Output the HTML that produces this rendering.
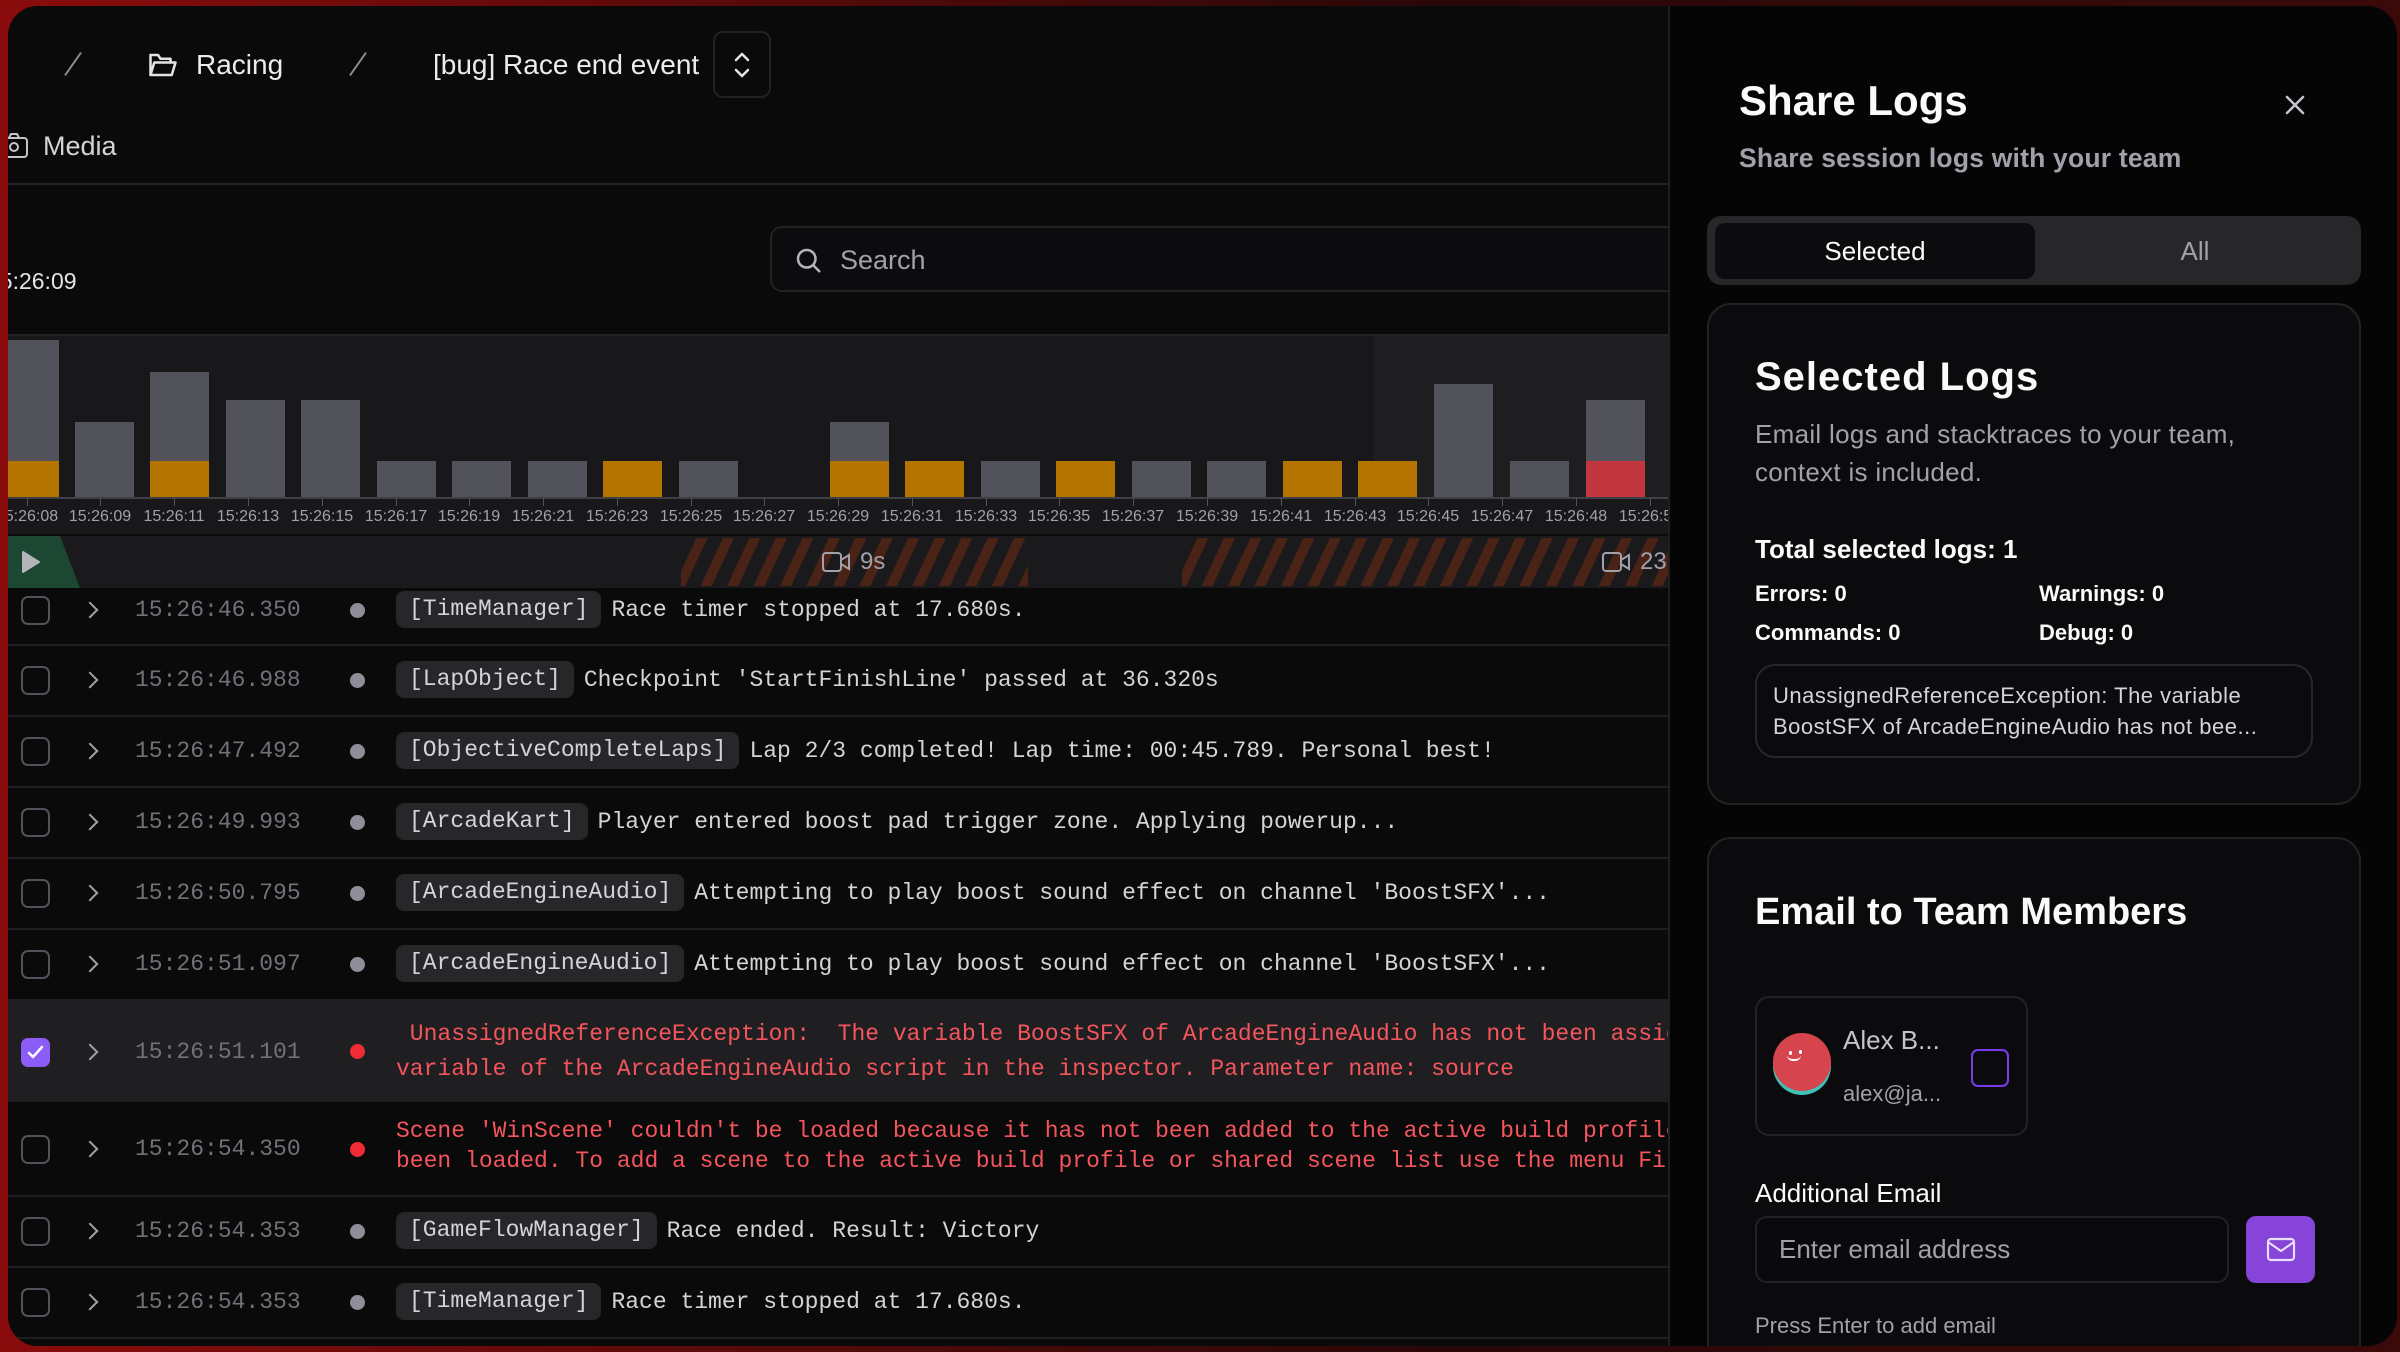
<!DOCTYPE html>
<html><head><meta charset="utf-8"><style>
*{box-sizing:border-box;margin:0;padding:0}
html,body{width:2400px;height:1352px;overflow:hidden}
body{background:linear-gradient(90deg,#8a0c0c 0%,#5a0a0a 30%,#2a0808 60%,#3a0a0a 100%);font-family:"Liberation Sans",sans-serif;position:relative}
#app{position:absolute;left:8px;top:6px;right:3px;bottom:6px;border-radius:30px;background:#0a0a0b;overflow:hidden}
.abs{position:absolute}
#left{position:absolute;left:-8px;top:-6px;width:1668px;height:1352px;overflow:hidden;background:#0a0a0b}
.mono{font-family:"Liberation Mono",monospace}
.tick{position:absolute;top:498px;width:1px;height:8px;background:#52525b}
.tl{position:absolute;top:508px;width:80px;margin-left:-40px;text-align:center;font-size:16px;color:#a1a1aa}
.bar{position:absolute;width:59px;bottom:0}
.row{position:absolute;left:0;width:1668px;border-bottom:2px solid #1f1f22}
.cb{position:absolute;left:21px;width:29px;height:29px;border:2px solid #52525b;border-radius:7px}
.chev{position:absolute;left:84px;width:12px;height:12px;border-right:2px solid #a1a1aa;border-top:2px solid #a1a1aa;transform:rotate(45deg)}
.ts{position:absolute;left:135px;font-size:23px;color:#71717a;line-height:30px}
.dot{position:absolute;left:350px;width:15px;height:15px;border-radius:50%;background:#8e8e98}
.msg{position:absolute;left:396px;white-space:nowrap;font-size:23px;color:#d4d4d8;display:flex;align-items:center}
.tag{background:#27272a;border-radius:8px;padding:0 13px;height:37px;line-height:37px;margin-right:10px;color:#d4d4d8}
.err{position:absolute;left:396px;white-space:pre;font-size:23px;color:#f4555d;line-height:35px}
#drawer{position:absolute;left:1660px;top:-6px;width:732px;height:1352px;background:#050506;border-left:2px solid #1f1f22}
#dc{position:absolute;left:-9px;top:0;width:740px;height:1352px}
.card{position:absolute;left:46px;width:654px;border:2px solid #222225;border-radius:24px;background:#0b0b0d}
</style></head><body>
<div id="app">
<div id="left">
  <div class="abs" style="left:72px;top:50px;width:2px;height:28px;background:#8a8a92;transform:rotate(35deg)"></div>
  <svg class="abs" style="left:148px;top:51px" width="30" height="28" viewBox="0 0 24 22" fill="none" stroke="#e4e4e7" stroke-width="2" stroke-linejoin="round"><path d="M2 19V3h6l2 3h8v3"/><path d="M2 19l3-10h17l-3 10z"/></svg>
  <div class="abs" style="left:196px;top:49px;font-size:28px;color:#ececef">Racing</div>
  <div class="abs" style="left:357px;top:50px;width:2px;height:28px;background:#8a8a92;transform:rotate(35deg)"></div>
  <div class="abs" style="left:433px;top:49px;font-size:28px;color:#ececef">[bug] Race end event</div>
  <div class="abs" style="left:713px;top:31px;width:58px;height:67px;border:2px solid #222225;border-radius:10px"></div>
  <svg class="abs" style="left:730px;top:50px" width="24" height="30" viewBox="0 0 24 30" fill="none" stroke="#e4e4e7" stroke-width="2.5" stroke-linecap="round" stroke-linejoin="round"><path d="M6 10l6-6 6 6"/><path d="M6 20l6 6 6-6"/></svg>
  <svg class="abs" style="left:0px;top:133px" width="28" height="26" viewBox="0 0 28 26" fill="none" stroke="#c4c4ca" stroke-width="2"><rect x="1" y="5" width="26" height="19" rx="3"/><path d="M9 5l2-4h6l2 4"/><circle cx="14" cy="14" r="4"/></svg>
  <div class="abs" style="left:43px;top:131px;font-size:27px;color:#d4d4d8">Media</div>
  <div class="abs" style="left:0;top:183px;width:1668px;height:2px;background:#232326"></div>
  <div class="abs" style="left:-13px;top:268px;font-size:23px;color:#e4e4e7">15:26:09</div>
  <div class="abs" style="left:770px;top:226px;width:960px;height:66px;border:2px solid #222225;border-radius:12px;background:#0c0c0e"></div>
  <svg class="abs" style="left:793px;top:245px" width="30" height="30" viewBox="0 0 24 24" fill="none" stroke="#b4b4bb" stroke-width="2" stroke-linecap="round"><circle cx="11" cy="11" r="7"/><path d="M16.5 16.5L21 21"/></svg>
  <div class="abs" style="left:840px;top:245px;font-size:27px;color:#a1a1aa">Search</div>
  <div class="abs" style="left:0;top:334px;width:1668px;height:200px;background:#18181b;border-top:2px solid #222225"></div>
  <div class="abs" style="left:1374px;top:336px;width:294px;height:162px;background:#1e1e21"></div>
  <div class="abs" style="left:0;top:336px;width:1668px;height:162px">
    <div class="bar" style="left:0px;height:158px;background:linear-gradient(#52525b 0 121px,#b57300 121px)"></div>
    <div class="bar" style="left:75px;height:76px;background:#52525b"></div>
    <div class="bar" style="left:150px;height:126px;background:linear-gradient(#52525b 0 89px,#b57300 89px)"></div>
    <div class="bar" style="left:226px;height:98px;background:#52525b"></div>
    <div class="bar" style="left:301px;height:98px;background:#52525b"></div>
    <div class="bar" style="left:377px;height:37px;background:#52525b"></div>
    <div class="bar" style="left:452px;height:37px;background:#52525b"></div>
    <div class="bar" style="left:528px;height:37px;background:#52525b"></div>
    <div class="bar" style="left:603px;height:37px;background:#b57300"></div>
    <div class="bar" style="left:679px;height:37px;background:#52525b"></div>
    <div class="bar" style="left:830px;height:76px;background:linear-gradient(#52525b 0 39px,#b57300 39px)"></div>
    <div class="bar" style="left:905px;height:37px;background:#b57300"></div>
    <div class="bar" style="left:981px;height:37px;background:#52525b"></div>
    <div class="bar" style="left:1056px;height:37px;background:#b57300"></div>
    <div class="bar" style="left:1132px;height:37px;background:#52525b"></div>
    <div class="bar" style="left:1207px;height:37px;background:#52525b"></div>
    <div class="bar" style="left:1283px;height:37px;background:#b57300"></div>
    <div class="bar" style="left:1358px;height:37px;background:#b57300"></div>
    <div class="bar" style="left:1434px;height:114px;background:#52525b"></div>
    <div class="bar" style="left:1510px;height:37px;background:#52525b"></div>
    <div class="bar" style="left:1586px;height:98px;background:linear-gradient(#52525b 0 61px,#c1363f 61px)"></div>
  </div>
  <div class="abs" style="left:0;top:497px;width:1668px;height:2px;background:#3f3f46"></div>
  <div class="tick" style="left:27px"></div><div class="tl" style="left:27px">15:26:08</div>
  <div class="tick" style="left:100px"></div><div class="tl" style="left:100px">15:26:09</div>
  <div class="tick" style="left:174px"></div><div class="tl" style="left:174px">15:26:11</div>
  <div class="tick" style="left:248px"></div><div class="tl" style="left:248px">15:26:13</div>
  <div class="tick" style="left:322px"></div><div class="tl" style="left:322px">15:26:15</div>
  <div class="tick" style="left:396px"></div><div class="tl" style="left:396px">15:26:17</div>
  <div class="tick" style="left:469px"></div><div class="tl" style="left:469px">15:26:19</div>
  <div class="tick" style="left:543px"></div><div class="tl" style="left:543px">15:26:21</div>
  <div class="tick" style="left:617px"></div><div class="tl" style="left:617px">15:26:23</div>
  <div class="tick" style="left:691px"></div><div class="tl" style="left:691px">15:26:25</div>
  <div class="tick" style="left:764px"></div><div class="tl" style="left:764px">15:26:27</div>
  <div class="tick" style="left:838px"></div><div class="tl" style="left:838px">15:26:29</div>
  <div class="tick" style="left:912px"></div><div class="tl" style="left:912px">15:26:31</div>
  <div class="tick" style="left:986px"></div><div class="tl" style="left:986px">15:26:33</div>
  <div class="tick" style="left:1059px"></div><div class="tl" style="left:1059px">15:26:35</div>
  <div class="tick" style="left:1133px"></div><div class="tl" style="left:1133px">15:26:37</div>
  <div class="tick" style="left:1207px"></div><div class="tl" style="left:1207px">15:26:39</div>
  <div class="tick" style="left:1281px"></div><div class="tl" style="left:1281px">15:26:41</div>
  <div class="tick" style="left:1355px"></div><div class="tl" style="left:1355px">15:26:43</div>
  <div class="tick" style="left:1428px"></div><div class="tl" style="left:1428px">15:26:45</div>
  <div class="tick" style="left:1502px"></div><div class="tl" style="left:1502px">15:26:47</div>
  <div class="tick" style="left:1576px"></div><div class="tl" style="left:1576px">15:26:48</div>
  <div class="tick" style="left:1650px"></div><div class="tl" style="left:1650px">15:26:50</div>
  <div class="abs" style="left:0;top:536px;width:1668px;height:52px;background:#1a1a1d"></div>
  <div class="abs" style="left:0;top:536px;width:80px;height:52px;background:#1b4733;clip-path:polygon(0 0,60px 0,80px 100%,0 100%)"></div>
  <svg class="abs" style="left:20px;top:549px" width="22" height="26" viewBox="0 0 22 26"><path d="M3 3l16 10-16 10z" fill="#b4b4bb" stroke="#b4b4bb" stroke-width="2" stroke-linejoin="round"/></svg>
  <div class="abs" style="left:681px;top:538px;width:347px;height:48px;background:repeating-linear-gradient(115deg,#1a1a1d 0 14px,#4a2316 14px 24px)"></div>
  <div class="abs" style="left:1182px;top:538px;width:486px;height:48px;background:repeating-linear-gradient(115deg,#1a1a1d 0 14px,#4a2316 14px 24px)"></div>
  <svg class="abs" style="left:822px;top:551px" width="30" height="22" viewBox="0 0 30 22" fill="none" stroke="#a1a1aa" stroke-width="2"><rect x="1" y="2" width="18" height="18" rx="3"/><path d="M19 9l8-5v14l-8-5"/></svg>
  <div class="abs" style="left:860px;top:548px;font-size:24px;color:#a1a1aa">9s</div>
  <svg class="abs" style="left:1602px;top:551px" width="30" height="22" viewBox="0 0 30 22" fill="none" stroke="#a1a1aa" stroke-width="2"><rect x="1" y="2" width="18" height="18" rx="3"/><path d="M19 9l8-5v14l-8-5"/></svg>
  <div class="abs" style="left:1640px;top:548px;font-size:24px;color:#a1a1aa">23</div>
  <div class="row mono" style="top:588px;height:58px">
    <div class="cb" style="top:8px"></div><div class="chev" style="top:16px"></div>
    <div class="ts" style="top:7px">15:26:46.350</div><div class="dot" style="top:15px"></div>
    <div class="msg" style="top:3px"><span class="tag">[TimeManager]</span>Race timer stopped at 17.680s.</div>
  </div>
  <div class="row mono" style="top:646px;height:71px">
    <div class="cb" style="top:20px"></div><div class="chev" style="top:28px"></div>
    <div class="ts" style="top:19px">15:26:46.988</div><div class="dot" style="top:27px"></div>
    <div class="msg" style="top:15px"><span class="tag">[LapObject]</span>Checkpoint 'StartFinishLine' passed at 36.320s</div>
  </div>
  <div class="row mono" style="top:717px;height:71px">
    <div class="cb" style="top:20px"></div><div class="chev" style="top:28px"></div>
    <div class="ts" style="top:19px">15:26:47.492</div><div class="dot" style="top:27px"></div>
    <div class="msg" style="top:15px"><span class="tag">[ObjectiveCompleteLaps]</span>Lap 2/3 completed! Lap time: 00:45.789. Personal best!</div>
  </div>
  <div class="row mono" style="top:788px;height:71px">
    <div class="cb" style="top:20px"></div><div class="chev" style="top:28px"></div>
    <div class="ts" style="top:19px">15:26:49.993</div><div class="dot" style="top:27px"></div>
    <div class="msg" style="top:15px"><span class="tag">[ArcadeKart]</span>Player entered boost pad trigger zone. Applying powerup...</div>
  </div>
  <div class="row mono" style="top:859px;height:71px">
    <div class="cb" style="top:20px"></div><div class="chev" style="top:28px"></div>
    <div class="ts" style="top:19px">15:26:50.795</div><div class="dot" style="top:27px"></div>
    <div class="msg" style="top:15px"><span class="tag">[ArcadeEngineAudio]</span>Attempting to play boost sound effect on channel 'BoostSFX'...</div>
  </div>
  <div class="row mono" style="top:930px;height:71px">
    <div class="cb" style="top:20px"></div><div class="chev" style="top:28px"></div>
    <div class="ts" style="top:19px">15:26:51.097</div><div class="dot" style="top:27px"></div>
    <div class="msg" style="top:15px"><span class="tag">[ArcadeEngineAudio]</span>Attempting to play boost sound effect on channel 'BoostSFX'...</div>
  </div>
  <div class="row mono" style="top:1001px;height:101px;background:#1f1f22">
    <div class="cb" style="top:37px;background:#8b5cf6;border-color:#8b5cf6"><svg width="25" height="25" viewBox="0 0 25 25" style="position:absolute;left:0;top:0" fill="none" stroke="#fff" stroke-width="2.5" stroke-linecap="round" stroke-linejoin="round"><path d="M6 13l4 4 9-10"/></svg></div>
    <div class="chev" style="top:45px"></div>
    <div class="ts" style="top:36px">15:26:51.101</div><div class="dot" style="top:43px;background:#ef2b35"></div>
    <div class="err" style="top:16px"> UnassignedReferenceException:  The variable BoostSFX of ArcadeEngineAudio has not been assigned. You probably need to assign the
variable of the ArcadeEngineAudio script in the inspector. Parameter name: source</div>
  </div>
  <div class="row mono" style="top:1102px;height:95px">
    <div class="cb" style="top:33px"></div><div class="chev" style="top:41px"></div>
    <div class="ts" style="top:32px">15:26:54.350</div><div class="dot" style="top:40px;background:#ef2b35"></div>
    <div class="err" style="top:14px;line-height:30px">Scene 'WinScene' couldn't be loaded because it has not been added to the active build profile or
been loaded. To add a scene to the active build profile or shared scene list use the menu File</div>
  </div>
  <div class="row mono" style="top:1197px;height:71px">
    <div class="cb" style="top:20px"></div><div class="chev" style="top:28px"></div>
    <div class="ts" style="top:19px">15:26:54.353</div><div class="dot" style="top:27px"></div>
    <div class="msg" style="top:15px"><span class="tag">[GameFlowManager]</span>Race ended. Result: Victory</div>
  </div>
  <div class="row mono" style="top:1268px;height:71px">
    <div class="cb" style="top:20px"></div><div class="chev" style="top:28px"></div>
    <div class="ts" style="top:19px">15:26:54.353</div><div class="dot" style="top:27px"></div>
    <div class="msg" style="top:15px"><span class="tag">[TimeManager]</span>Race timer stopped at 17.680s.</div>
  </div>
</div>
<div id="drawer"><div id="dc">
  <div class="abs" style="left:78px;top:77px;font-size:42px;font-weight:bold;color:#fafafa">Share Logs</div>
  <div class="abs" style="left:78px;top:143px;font-size:26.5px;font-weight:bold;color:#a1a1aa;letter-spacing:0.2px">Share session logs with your team</div>
  <svg class="abs" style="left:622px;top:93px" width="24" height="24" viewBox="0 0 24 24" stroke="#c4c4ca" stroke-width="2.5" stroke-linecap="round"><path d="M4 4l16 16M20 4L4 20"/></svg>
  <div class="abs" style="left:46px;top:216px;width:654px;height:69px;background:#27272a;border-radius:14px"></div>
  <div class="abs" style="left:54px;top:223px;width:320px;height:56px;background:#0c0c0e;border-radius:10px;text-align:center;line-height:56px;font-size:26px;color:#fafafa">Selected</div>
  <div class="abs" style="left:374px;top:223px;width:320px;height:56px;text-align:center;line-height:56px;font-size:26px;color:#a1a1aa">All</div>
  <div class="card" style="top:303px;height:502px">
    <div class="abs" style="left:46px;top:50px;font-size:40px;font-weight:bold;color:#fafafa;letter-spacing:1px">Selected Logs</div>
    <div class="abs" style="left:46px;top:110px;font-size:26px;line-height:38px;color:#a1a1aa;letter-spacing:0.3px">Email logs and stacktraces to your team,<br>context is included.</div>
    <div class="abs" style="left:46px;top:229px;font-size:26px;font-weight:bold;color:#fafafa">Total selected logs: 1</div>
    <div class="abs" style="left:46px;top:276px;font-size:22px;font-weight:bold;color:#fafafa">Errors: 0</div>
    <div class="abs" style="left:330px;top:276px;font-size:22px;font-weight:bold;color:#fafafa">Warnings: 0</div>
    <div class="abs" style="left:46px;top:315px;font-size:22px;font-weight:bold;color:#fafafa">Commands: 0</div>
    <div class="abs" style="left:330px;top:315px;font-size:22px;font-weight:bold;color:#fafafa">Debug: 0</div>
    <div class="abs" style="left:46px;top:359px;width:558px;height:94px;border:2px solid #27272a;border-radius:20px;padding:14px 16px;font-size:22px;line-height:31px;color:#d4d4d8;letter-spacing:0.5px;white-space:nowrap">UnassignedReferenceException: The variable<br>BoostSFX of ArcadeEngineAudio has not bee...</div>
  </div>
  <div class="card" style="top:837px;height:560px">
    <div class="abs" style="left:46px;top:52px;font-size:38px;font-weight:bold;color:#fafafa">Email to Team Members</div>
    <div class="abs" style="left:46px;top:157px;width:273px;height:140px;border:2px solid #222225;border-radius:14px"></div>
    <div class="abs" style="left:64px;top:198px;width:58px;height:58px;border-radius:50%;background:#3fc1b8"></div>
    <div class="abs" style="left:64px;top:194px;width:58px;height:58px;border-radius:50%;background:#d6444e"></div>
    <div class="abs" style="left:80px;top:212px;width:3px;height:4px;background:#fff;border-radius:2px"></div>
    <div class="abs" style="left:90px;top:211px;width:3px;height:4px;background:#fff;border-radius:2px"></div>
    <div class="abs" style="left:78px;top:216px;width:14px;height:6px;border-bottom:2px solid #fff;border-radius:0 0 8px 8px"></div>
    <div class="abs" style="left:134px;top:186px;font-size:26px;color:#c4c4ca">Alex B...</div>
    <div class="abs" style="left:134px;top:242px;font-size:22px;color:#a1a1aa">alex@ja...</div>
    <div class="abs" style="left:262px;top:210px;width:38px;height:38px;border:2px solid #7c3aed;border-radius:7px"></div>
    <div class="abs" style="left:46px;top:339px;font-size:26px;color:#fafafa">Additional Email</div>
    <div class="abs" style="left:46px;top:377px;width:474px;height:67px;border:2px solid #222225;border-radius:12px;background:#0a0a0c"></div>
    <div class="abs" style="left:70px;top:395px;font-size:26px;color:#a1a1aa">Enter email address</div>
    <div class="abs" style="left:537px;top:377px;width:69px;height:67px;background:#8645d8;border-radius:10px"></div>
    <svg class="abs" style="left:557px;top:398px" width="30" height="26" viewBox="0 0 30 26" fill="none" stroke="#ecdcff" stroke-width="2.2" stroke-linejoin="round"><rect x="2" y="2" width="26" height="21" rx="3"/><path d="M2 5l13 9 13-9"/></svg>
    <div class="abs" style="left:46px;top:474px;font-size:22px;color:#a1a1aa">Press Enter to add email</div>
  </div>
</div></div>
</div>
</body></html>
